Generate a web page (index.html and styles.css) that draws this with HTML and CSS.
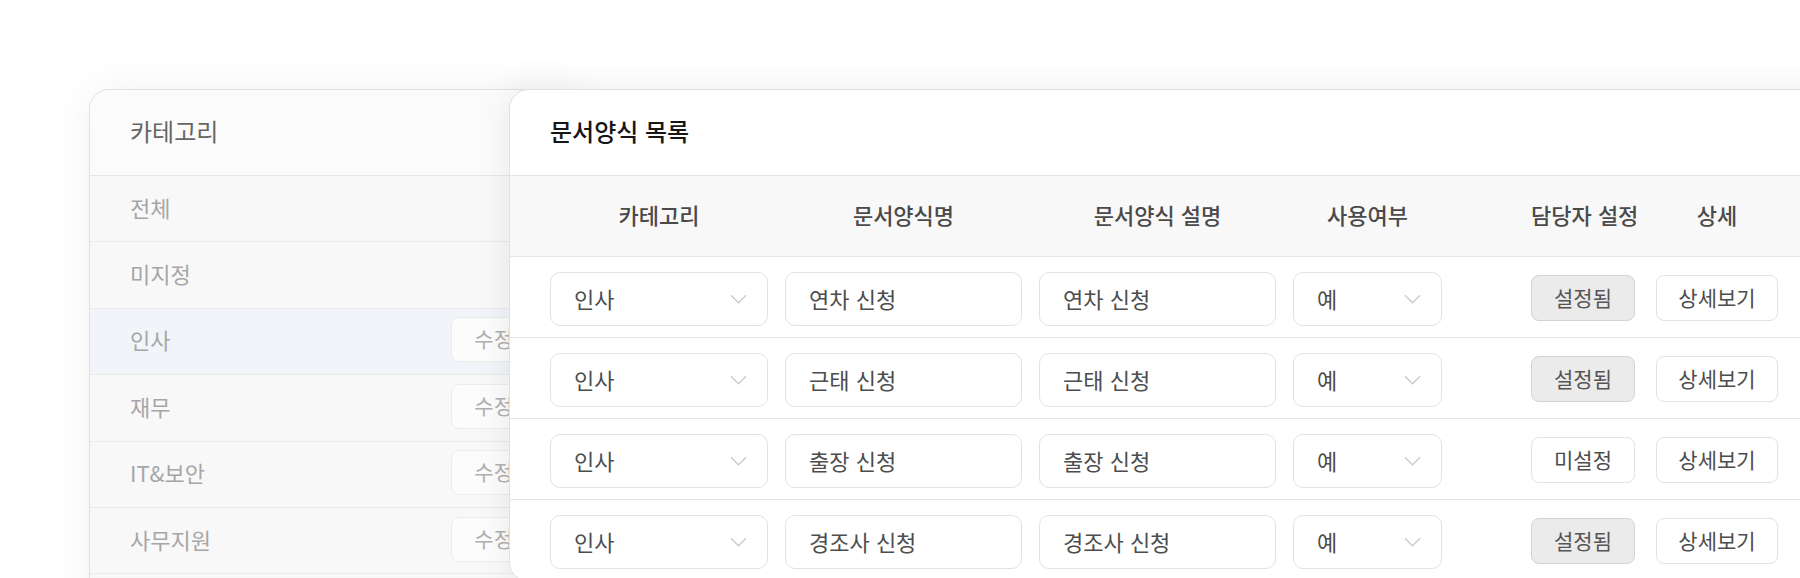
FILE: index.html
```html
<!DOCTYPE html>
<html lang="ko">
<head>
<meta charset="utf-8">
<title>문서양식 관리</title>
<link rel="stylesheet" href="styles.css">
</head>
<body>
<div class="stage">
  <section class="card cat-card">
    <div class="cat-head">카테고리</div>
    <ul class="cat-list">
      <li class="cat-item"><span>전체</span></li>
      <li class="cat-item"><span>미지정</span></li>
      <li class="cat-item is-active"><span>인사</span><button class="edit-btn">수정</button></li>
      <li class="cat-item"><span>재무</span><button class="edit-btn">수정</button></li>
      <li class="cat-item"><span>IT&amp;보안</span><button class="edit-btn">수정</button></li>
      <li class="cat-item"><span>사무지원</span><button class="edit-btn">수정</button></li>
    </ul>
  </section>

  <section class="card form-card">
    <div class="form-head">문서양식 목록</div>
    <div class="table">
      <div class="trow thead">
        <div class="th">카테고리</div>
        <div class="th">문서양식명</div>
        <div class="th">문서양식 설명</div>
        <div class="th">사용여부</div>
        <div class="actions">
          <div class="th th-manager">담당자 설정</div>
          <div class="th th-detail">상세</div>
        </div>
      </div>

      <div class="trow">
        <div class="field select"><span>인사</span><svg class="chev" viewBox="0 0 18 10"><path d="M1 1l8 8 8-8"/></svg></div>
        <div class="field"><span>연차 신청</span></div>
        <div class="field"><span>연차 신청</span></div>
        <div class="field select"><span>예</span><svg class="chev" viewBox="0 0 18 10"><path d="M1 1l8 8 8-8"/></svg></div>
        <div class="actions">
          <button class="btn btn-set">설정됨</button>
          <button class="btn btn-detail">상세보기</button>
        </div>
      </div>

      <div class="trow">
        <div class="field select"><span>인사</span><svg class="chev" viewBox="0 0 18 10"><path d="M1 1l8 8 8-8"/></svg></div>
        <div class="field"><span>근태 신청</span></div>
        <div class="field"><span>근태 신청</span></div>
        <div class="field select"><span>예</span><svg class="chev" viewBox="0 0 18 10"><path d="M1 1l8 8 8-8"/></svg></div>
        <div class="actions">
          <button class="btn btn-set">설정됨</button>
          <button class="btn btn-detail">상세보기</button>
        </div>
      </div>

      <div class="trow">
        <div class="field select"><span>인사</span><svg class="chev" viewBox="0 0 18 10"><path d="M1 1l8 8 8-8"/></svg></div>
        <div class="field"><span>출장 신청</span></div>
        <div class="field"><span>출장 신청</span></div>
        <div class="field select"><span>예</span><svg class="chev" viewBox="0 0 18 10"><path d="M1 1l8 8 8-8"/></svg></div>
        <div class="actions">
          <button class="btn btn-unset">미설정</button>
          <button class="btn btn-detail">상세보기</button>
        </div>
      </div>

      <div class="trow">
        <div class="field select"><span>인사</span><svg class="chev" viewBox="0 0 18 10"><path d="M1 1l8 8 8-8"/></svg></div>
        <div class="field"><span>경조사 신청</span></div>
        <div class="field"><span>경조사 신청</span></div>
        <div class="field select"><span>예</span><svg class="chev" viewBox="0 0 18 10"><path d="M1 1l8 8 8-8"/></svg></div>
        <div class="actions">
          <button class="btn btn-set">설정됨</button>
          <button class="btn btn-detail">상세보기</button>
        </div>
      </div>
    </div>
  </section>
</div>
</body>
</html>
```

FILE: styles.css
```css
* { box-sizing: border-box; }

html, body {
  margin: 0;
  padding: 0;
  width: 1800px;
  height: 578px;
  overflow: hidden;
  background: #ffffff;
  font-family: "Noto Sans CJK KR", "Noto Sans", "Liberation Sans", sans-serif;
}

.stage {
  display: flex;
  align-items: flex-start;
  height: 578px;
  overflow: hidden;
  padding: 89px 0 0 89px;
}

.card {
  flex: none;
  border: 1px solid #e1e1e1;
  border-radius: 20px;
  overflow: hidden;
}

/* ---------- left category card ---------- */
.cat-card {
  width: 488px;
  min-height: 560px;
  background: #f8f8f8;
  box-shadow: 0 0 40px rgba(0, 0, 0, 0.06);
}

.cat-head {
  height: 86px;
  display: flex;
  align-items: center;
  padding: 0 40px 4px;
  font-size: 24px;
  color: #666666;
  background: #fbfbfb;
  border-bottom: 1px solid #e6e6e6;
}

.cat-list {
  list-style: none;
  margin: 0;
  padding: 0;
}

.cat-item {
  height: 66.4px;
  display: flex;
  align-items: center;
  justify-content: space-between;
  padding: 0 40px 4px;
  font-size: 22px;
  color: #a6a6a6;
  border-bottom: 1px solid #ebebeb;
  background: #f8f8f8;
}

.cat-item.is-active {
  background: #f1f4f9;
}

.edit-btn {
  height: 45px;
  padding: 0 22px 3px;
  margin-top: 1px;
  font-family: inherit;
  font-size: 21px;
  color: #b0b0b0;
  background: #fcfcfc;
  border: 1px solid #ececec;
  border-radius: 8px;
}

/* ---------- right form list card ---------- */
.form-card {
  width: 1400px;
  margin-left: -68px;
  background: #ffffff;
  box-shadow: 0 0 36px rgba(0, 0, 0, 0.08);
}

.form-head {
  height: 86px;
  display: flex;
  align-items: center;
  padding: 0 40px 4px;
  font-size: 24px;
  font-weight: 500;
  color: #161616;
  border-bottom: 1px solid #e3e3e3;
}

.trow {
  height: 81px;
  display: grid;
  grid-template-columns: 218px 237px 237px 149px auto;
  column-gap: 17px;
  align-items: center;
  padding: 0 40px;
  border-bottom: 1px solid #e6e6e6;
}

.thead {
  background: #f8f8f8;
}

.th {
  padding-bottom: 4px;
  text-align: center;
  font-size: 22px;
  font-weight: 500;
  color: #4a4a4a;
  white-space: nowrap;
}

.actions {
  display: flex;
  align-items: center;
  gap: 21px;
  padding-left: 72px;
}

.th-manager { width: 104px; }
.th-detail { width: 122px; }

.field {
  height: 54px;
  margin-top: 4px;
  display: flex;
  align-items: center;
  justify-content: space-between;
  padding: 0 20px 3px 23px;
  font-size: 22px;
  color: #4d4d4d;
  background: #ffffff;
  border: 1px solid #e2e2e2;
  border-radius: 10px;
}

.chev {
  width: 17px;
  height: 10px;
  margin-top: 3px;
  fill: none;
  stroke: #c9c9c9;
  stroke-width: 1.3;
}

.btn {
  height: 46px;
  margin-top: 2px;
  padding: 0 0 3px;
  font-family: inherit;
  font-size: 21px;
  color: #4d4d4d;
  border-radius: 8px;
  white-space: nowrap;
}

.btn-set {
  width: 104px;
  background: #ebebeb;
  border: 1px solid #d2d2d2;
  color: #555555;
}

.btn-unset {
  width: 104px;
  background: #ffffff;
  border: 1px solid #e2e2e2;
}

.btn-detail {
  width: 122px;
  background: #ffffff;
  border: 1px solid #e2e2e2;
}
```
